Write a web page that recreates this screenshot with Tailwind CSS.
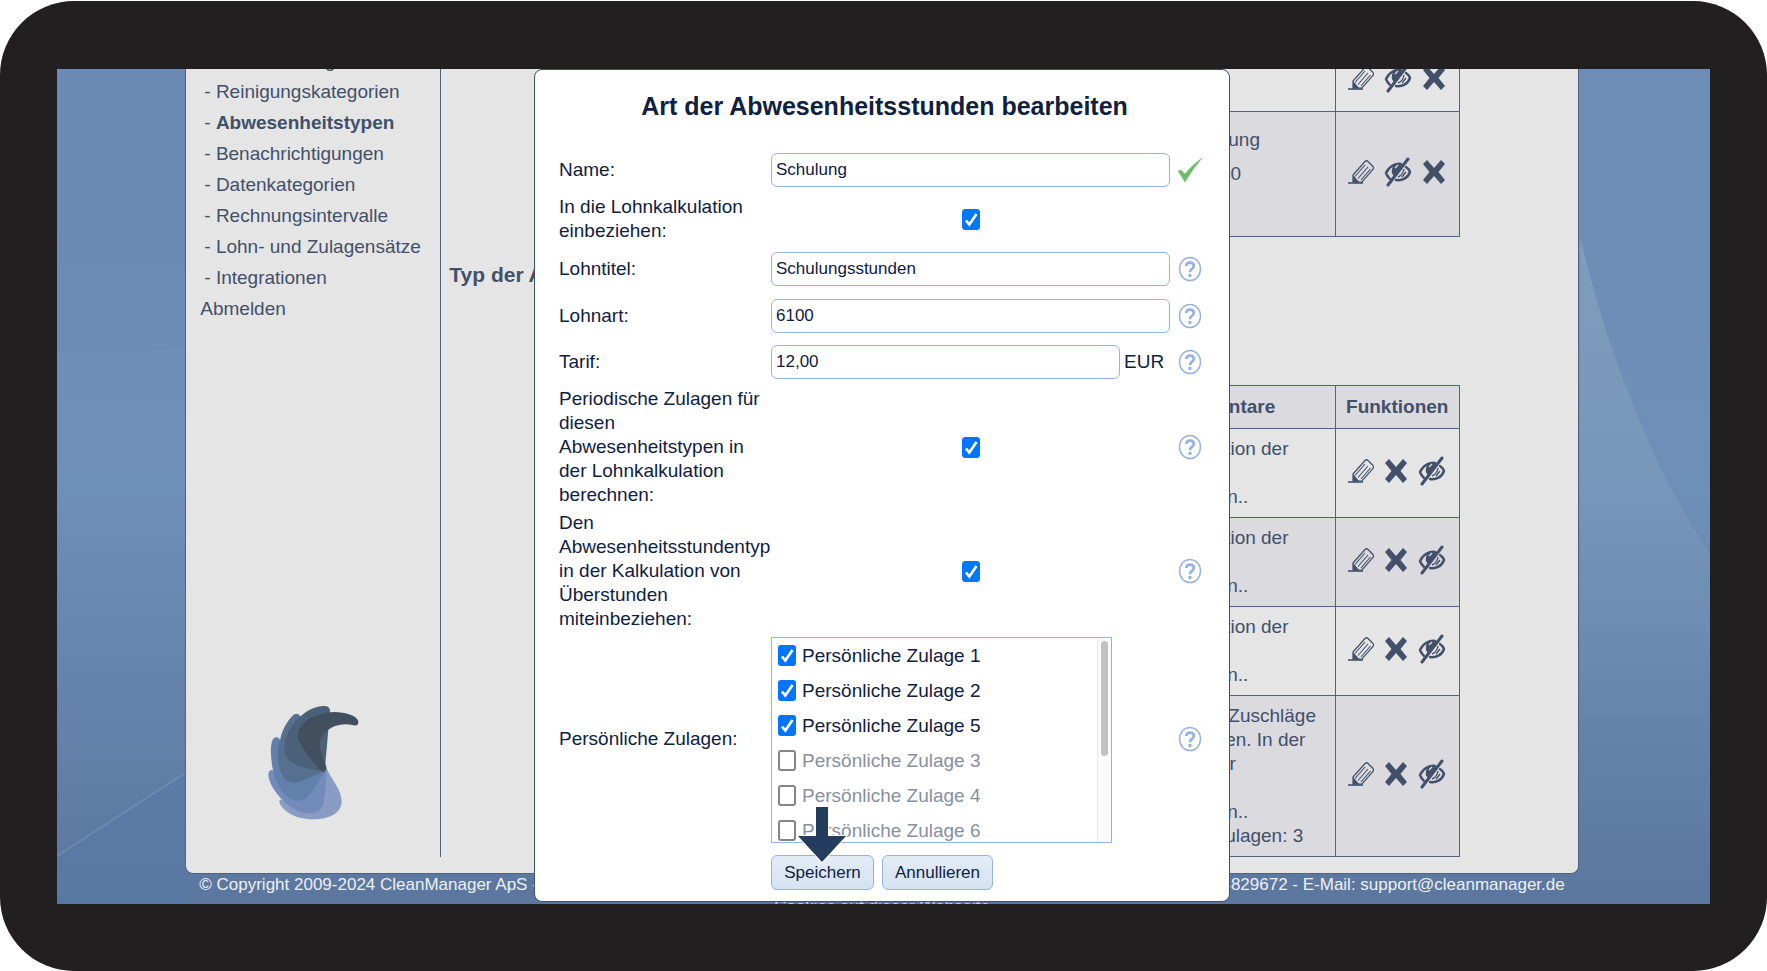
<!DOCTYPE html>
<html lang="de">

<head>
    <meta charset="UTF-8" />
    <meta name="viewport" content="width=device-width, initial-scale=1.0" />
    <!-- Tailwind CSS -->
    <script src="https://cdn.jsdelivr.net/npm/@tailwindcss/browser@4"></script>
    <title>CleanManager - Abwesenheitstypen</title>
</head>

<body class="bg-white font-['Liberation_Sans',Arial,sans-serif] text-[19px] leading-6 text-[#10213f]">

    <!-- Symbole -->
    <svg class="hidden">
        <symbol id="icon-edit" viewBox="0 0 26 24">
            <path d="M5 15 L17 1.500 Q18.500 0 20 1.500 L25 6.500 Q26 8 25 9.500 L14 22 L5 22 Z" fill="none" stroke="currentColor" stroke-width="1.200" />
            <path d="M7 16.500 L17 5 M10 18.500 L20 7 M13 20 L22.500 9" fill="none" stroke="currentColor" stroke-width="1.100" />
            <path d="M5 15 L11.500 22.500 L5 22.500 Z" fill="currentColor" />
            <path d="M0 23 H15" stroke="currentColor" stroke-width="1.600" />
        </symbol>
        <symbol id="icon-delete" viewBox="0 0 24 26">
            <path d="M1 5 L5 1 L12 9 L19 1 L23 5 L16.500 13 L23 21 L19 25 L12 17 L5 25 L1 21 L7.500 13 Z" fill="currentColor" />
        </symbol>
        <symbol id="icon-hide" viewBox="0 0 28 30">
            <path d="M2 16 C5 9 12 6 17 7 M22 10 Q25 12 26 15 C24 21 18 24 12 23 M6 22 Q3 19 2 16" fill="none" stroke="currentColor" stroke-width="2.400" stroke-linecap="round" />
            <path d="M9 9 Q6 16 10 19 L18 9 Q13 5 9 9 Z" fill="currentColor" />
            <path d="M11 11 L14 8" stroke="#dcdbe0" stroke-width="1.500" />
            <path d="M14 20 Q19 18 20 12 M18 20 L22 15" fill="none" stroke="currentColor" stroke-width="1.400" />
            <path d="M4 28 L24 2" stroke="currentColor" stroke-width="3" stroke-linecap="round" />
        </symbol>
        <symbol id="icon-help" viewBox="0 0 24 26">
            <ellipse cx="12" cy="13" rx="10.500" ry="11.500" fill="none" stroke="#97b2e0" stroke-width="1.500" />
            <path d="M8.300 10 Q8.500 6.700 12 6.700 Q15.800 6.700 15.800 10 Q15.800 12 13.600 13.200 Q12 14.200 12 16.300" fill="none" stroke="#97b2e0" stroke-width="2.700" />
            <rect x="10.500" y="18" width="3" height="3" fill="#97b2e0" />
        </symbol>
        <symbol id="icon-tick" viewBox="0 0 18 21">
            <path d="M4 11.500 L7.300 15.500 L14.500 5" fill="none" stroke="#fff" stroke-width="2.700" />
        </symbol>
    </svg>

    <div class="min-h-screen py-px">
        <div class="flex min-h-[969px] flex-col rounded-[74px] bg-[#221f20] px-[57px] pt-17 pb-[67px]">
            <div class="relative flex-1 overflow-hidden bg-linear-to-b from-[#6d8cb6] via-[#6e8fb8] to-[#5b779f] pr-[3px]">

                <!-- Lichtstreifen im Hintergrund -->
                <svg class="absolute inset-0 h-full w-full" viewBox="0 0 1653 834" preserveAspectRatio="none">
                    <defs>
                        <linearGradient id="glow" x1="0" y1="0" x2="0" y2="1">
                            <stop offset="0" stop-color="#9fb4c4" stop-opacity=".4" />
                            <stop offset=".6" stop-color="#8fa8c4" stop-opacity=".15" />
                            <stop offset="1" stop-color="#5a739b" stop-opacity="0" />
                        </linearGradient>
                    </defs>
                    <path d="M1523 167 Q1545 262 1580 345 Q1610 420 1653 484 V834 H1523 Z" fill="url(#glow)" />
                    <path d="M0 0 H130 V280 L0 284 Z" fill="#5f7fae" fill-opacity=".12" />
                    <path d="M0 786 L130 702 V834 H0 Z" fill="#5878a8" fill-opacity=".5" />
                    <path d="M0 786 L130 702" stroke="#7b9abc" stroke-opacity=".5" stroke-width="2" />
                </svg>

                <!-- Seite hinter dem Dialog -->
                <div class="absolute inset-y-0 right-[3px] left-0 mx-auto flex w-[84.3%] flex-col text-[#42506a]">
                    <div class="flex min-h-0 flex-1 rounded-b-lg border-x border-b border-[#50637f] bg-[#e5e5e5] pb-4">
                        <nav class="-mt-6 flex w-[255px] shrink-0 flex-col border-r border-[#50637f] pl-4">
                            <ul class="pl-0.5 leading-[31px] whitespace-nowrap">
                                <li>- <a href="#">Dienstleistungen</a></li>
                                <li>- <a href="#">Reinigungskategorien</a></li>
                                <li>- <a href="#" class="font-bold">Abwesenheitstypen</a></li>
                                <li>- <a href="#">Benachrichtigungen</a></li>
                                <li>- <a href="#">Datenkategorien</a></li>
                                <li>- <a href="#">Rechnungsintervalle</a></li>
                                <li>- <a href="#">Lohn- und Zulagensätze</a></li>
                                <li>- <a href="#">Integrationen</a></li>
                            </ul>
                            <a href="#" class="-ml-0.5 leading-[31px]">Abmelden</a>
                            <svg class="mt-auto mb-9 ml-16 h-[118px] w-[95px]" viewBox="260 70 285 355" preserveAspectRatio="none">
                                <path d="M300 368 Q300 358 312 360 L440 262 C455 300 486 330 487 365 C487 402 450 420 400 420 C345 420 306 392 300 368 Z" fill="#8b9cc4" />
                                <path d="M267 285 Q268 270 280 272 L441 268 C440 310 440 345 431 375 C424 398 402 405 380 402 C325 392 268 325 267 285 Z" fill="#738bba" />
                                <path d="M275 200 Q278 172 292 173 Q302 174 305 190 L440 272 C420 300 405 330 388 350 C370 368 350 367 332 358 C285 325 272 250 275 200 Z" fill="#6181ab" />
                                <path d="M345 104 Q359 99 363 112 L438 274 C410 285 380 302 355 308 C325 314 308 295 299 262 C292 230 296 200 303 178 C310 145 328 118 345 104 Z" fill="#56708f" />
                                <path d="M430 79 Q452 77 452 94 L436 276 C400 270 355 265 328 242 C305 215 315 165 345 130 C370 98 400 82 430 79 Z" fill="#4b6079" />
                                <path d="M536 122 C540 137 530 140 520 136 C480 128 440 145 425 175 C414 205 432 235 441 262 C442 274 432 280 424 273 C400 245 365 205 356 175 C350 130 410 98 465 97 C500 98 530 108 536 122 Z" fill="#414f5f" />
                            </svg>
                        </nav>

                        <main class="min-w-0 flex-1 overflow-hidden pr-[118px] pl-2">
                            <table class="-mt-[22px] ml-auto w-4/5 table-fixed border-collapse border border-[#50637f]">
                                <tbody>
                                    <tr class="h-16">
                                        <td class="border border-[#50637f]"></td>
                                        <td class="w-[216px] border border-[#50637f]"></td>
                                        <td class="w-[124px] border border-[#50637f]">
                                            <div class="flex items-center justify-center gap-2.5 pb-1">
                                                <button aria-label="Bearbeiten"><svg class="h-6 w-[26px]"><use href="#icon-edit" /></svg></button>
                                                <button aria-label="Ausblenden"><svg class="h-[30px] w-7"><use href="#icon-hide" /></svg></button>
                                                <button aria-label="Löschen"><svg class="h-[26px] w-6"><use href="#icon-delete" /></svg></button>
                                            </div>
                                        </td>
                                    </tr>
                                    <tr class="bg-[#dbdadf]">
                                        <td class="border border-[#50637f]"></td>
                                        <td class="border border-[#50637f] px-1 py-4">
                                            <p>Zur Berechnung</p>
                                            <p class="my-2.5">Lohnart: 5040</p>
                                            <p>&nbsp;</p>
                                        </td>
                                        <td class="border border-[#50637f]">
                                            <div class="flex items-center justify-center gap-2.5 pb-1">
                                                <button aria-label="Bearbeiten"><svg class="h-6 w-[26px]"><use href="#icon-edit" /></svg></button>
                                                <button aria-label="Ausblenden"><svg class="h-[30px] w-7"><use href="#icon-hide" /></svg></button>
                                                <button aria-label="Löschen"><svg class="h-[26px] w-6"><use href="#icon-delete" /></svg></button>
                                            </div>
                                        </td>
                                    </tr>
                                </tbody>
                            </table>

                            <h2 class="mt-6 mb-24 text-[21px] leading-7 font-bold">Typ der Abwesenheit</h2>

                            <table class="ml-auto w-4/5 table-fixed border-collapse border border-[#50637f]">
                                <thead>
                                    <tr class="h-[43px] bg-[#dbdadf]">
                                        <th class="border border-[#50637f]"></th>
                                        <th class="w-[216px] border border-[#50637f] pr-5">Kommentare</th>
                                        <th class="w-[124px] border border-[#50637f]">Funktionen</th>
                                    </tr>
                                </thead>
                                <tbody>
                                    <tr>
                                        <td class="border border-[#50637f]"></td>
                                        <td class="border border-[#50637f] px-1 py-2">Lohnkalkulation der<br>Stunden<br>hinzurechnen..</td>
                                        <td class="border border-[#50637f]">
                                            <div class="flex items-center justify-center gap-2.5 pb-1">
                                                <button aria-label="Bearbeiten"><svg class="h-6 w-[26px]"><use href="#icon-edit" /></svg></button>
                                                <button aria-label="Löschen"><svg class="h-[26px] w-6"><use href="#icon-delete" /></svg></button>
                                                <button aria-label="Ausblenden"><svg class="h-[30px] w-7"><use href="#icon-hide" /></svg></button>
                                            </div>
                                        </td>
                                    </tr>
                                    <tr class="bg-[#dbdadf]">
                                        <td class="border border-[#50637f]"></td>
                                        <td class="border border-[#50637f] px-1 py-2">Lohnkalkulation der<br>Stunden<br>hinzurechnen..</td>
                                        <td class="border border-[#50637f]">
                                            <div class="flex items-center justify-center gap-2.5 pb-1">
                                                <button aria-label="Bearbeiten"><svg class="h-6 w-[26px]"><use href="#icon-edit" /></svg></button>
                                                <button aria-label="Löschen"><svg class="h-[26px] w-6"><use href="#icon-delete" /></svg></button>
                                                <button aria-label="Ausblenden"><svg class="h-[30px] w-7"><use href="#icon-hide" /></svg></button>
                                            </div>
                                        </td>
                                    </tr>
                                    <tr>
                                        <td class="border border-[#50637f]"></td>
                                        <td class="border border-[#50637f] px-1 py-2">Lohnkalkulation der<br>Stunden<br>hinzurechnen..</td>
                                        <td class="border border-[#50637f]">
                                            <div class="flex items-center justify-center gap-2.5 pb-1">
                                                <button aria-label="Bearbeiten"><svg class="h-6 w-[26px]"><use href="#icon-edit" /></svg></button>
                                                <button aria-label="Löschen"><svg class="h-[26px] w-6"><use href="#icon-delete" /></svg></button>
                                                <button aria-label="Ausblenden"><svg class="h-[30px] w-7"><use href="#icon-hide" /></svg></button>
                                            </div>
                                        </td>
                                    </tr>
                                    <tr class="bg-[#dbdadf]">
                                        <td class="border border-[#50637f]"></td>
                                        <td class="border border-[#50637f] px-1 py-2">Periodische Zuschläge<br>einzubeziehen. In der<br>Stunden aller<br>Typen<br>hinzurechnen..<br>Anzahl an Zulagen: 3</td>
                                        <td class="border border-[#50637f]">
                                            <div class="flex items-center justify-center gap-2.5 pb-1">
                                                <button aria-label="Bearbeiten"><svg class="h-6 w-[26px]"><use href="#icon-edit" /></svg></button>
                                                <button aria-label="Löschen"><svg class="h-[26px] w-6"><use href="#icon-delete" /></svg></button>
                                                <button aria-label="Ausblenden"><svg class="h-[30px] w-7"><use href="#icon-hide" /></svg></button>
                                            </div>
                                        </td>
                                    </tr>
                                </tbody>
                            </table>
                        </main>
                    </div>

                    <footer class="h-[30px] shrink-0 px-3.5 text-[17px] leading-[22px] text-[#eef0f4]">
                        <div class="flex justify-between whitespace-nowrap">
                            <span>© Copyright 2009-2024 CleanManager ApS -</span>
                            <span>Telefon: 069 34829672 - E-Mail: support@cleanmanager.de</span>
                        </div>
                        <p class="text-center text-[#c3cddc]">Cookies auf dieser Webseite</p>
                    </footer>
                </div>

                <!-- Dialog -->
                <form class="relative mx-auto mb-0.5 w-[696px] max-w-full rounded-lg border border-[#3d4f6c] bg-white pt-[15px] pr-[19px] pb-[11px] pl-6">
                    <h1 class="mb-5 text-center text-[25px] leading-[42px] font-bold">Art der Abwesenheitsstunden bearbeiten</h1>

                    <div class="grid grid-cols-[212px_1fr_40px] items-center">
                        <label for="name" class="leading-[46px]">Name:</label>
                        <input id="name" type="text" value="Schulung" class="h-[34px] w-full rounded-md border border-[#97b2e0] px-1 text-[17px]" />
                        <svg class="mx-auto h-6 w-6" viewBox="0 0 24 24">
                            <path d="M0 13 L3 12 L7 16 Q14 7 24 0 Q14 12 7 24 Z" fill="#6dbd6a" stroke="#6dbd6a" stroke-width=".5" />
                        </svg>

                        <label for="lohnkalkulation" class="py-0.5">In die Lohnkalkulation einbeziehen:</label>
                        <span class="mx-auto grid">
                            <input id="lohnkalkulation" type="checkbox" checked class="col-start-1 row-start-1 h-[21px] w-[18px] appearance-none rounded-[3px] border border-[#757575] checked:border-[#0075ff] checked:bg-[#0075ff]" />
                            <svg class="pointer-events-none col-start-1 row-start-1 h-[21px] w-[18px]"><use href="#icon-tick" /></svg>
                        </span>
                        <span></span>

                        <label for="lohntitel" class="leading-[47px]">Lohntitel:</label>
                        <input id="lohntitel" type="text" value="Schulungsstunden" class="h-[34px] w-full rounded-md border border-[#97b2e0] px-1 text-[17px]" />
                        <svg class="mx-auto h-[26px] w-6"><use href="#icon-help" /></svg>

                        <label for="lohnart" class="leading-[47px]">Lohnart:</label>
                        <input id="lohnart" type="text" value="6100" class="h-[34px] w-full rounded-md border border-[#97b2e0] px-1 text-[17px]" />
                        <svg class="mx-auto h-[26px] w-6"><use href="#icon-help" /></svg>

                        <label for="tarif" class="leading-[46px]">Tarif:</label>
                        <div class="flex items-center gap-1">
                            <input id="tarif" type="text" value="12,00" class="h-[34px] min-w-0 flex-1 rounded-md border border-[#97b2e0] px-1 text-[17px]" />
                            <span class="w-[46px]">EUR</span>
                        </div>
                        <svg class="mx-auto h-[26px] w-6"><use href="#icon-help" /></svg>

                        <label for="periodisch" class="py-0.5">Periodische Zulagen für diesen Abwesenheitstypen in der Lohnkalkulation berechnen:</label>
                        <span class="mx-auto grid">
                            <input id="periodisch" type="checkbox" checked class="col-start-1 row-start-1 h-[21px] w-[18px] appearance-none rounded-[3px] border border-[#757575] checked:border-[#0075ff] checked:bg-[#0075ff]" />
                            <svg class="pointer-events-none col-start-1 row-start-1 h-[21px] w-[18px]"><use href="#icon-tick" /></svg>
                        </span>
                        <svg class="mx-auto h-[26px] w-6"><use href="#icon-help" /></svg>

                        <label for="ueberstunden" class="py-0.5">Den Abwesenheitsstundentyp in der Kalkulation von Überstunden miteinbeziehen:</label>
                        <span class="mx-auto grid">
                            <input id="ueberstunden" type="checkbox" checked class="col-start-1 row-start-1 h-[21px] w-[18px] appearance-none rounded-[3px] border border-[#757575] checked:border-[#0075ff] checked:bg-[#0075ff]" />
                            <svg class="pointer-events-none col-start-1 row-start-1 h-[21px] w-[18px]"><use href="#icon-tick" /></svg>
                        </span>
                        <svg class="mx-auto h-[26px] w-6"><use href="#icon-help" /></svg>

                        <span id="zulagen-label">Persönliche Zulagen:</span>
                        <div role="group" aria-labelledby="zulagen-label" class="mt-1 mb-px flex h-[206px] w-[341px] max-w-full overflow-hidden border border-[#97b2e0]">
                            <div id="zulagen" class="flex-1 pl-1.5 leading-[35px] whitespace-nowrap"></div>
                            <!-- Bildlaufleiste -->
                            <div class="w-3.5 border-l border-[#e8e8e8] bg-[#fafafa] pt-[3px] pl-[3px]">
                                <div class="h-[115px] w-[7px] rounded-full bg-[#c1c1c1]"></div>
                            </div>
                        </div>
                        <svg class="mx-auto h-[26px] w-6"><use href="#icon-help" /></svg>

                        <div class="col-start-2 mt-[11px] flex gap-2 text-[17px]">
                            <div class="relative">
                                <button type="button" class="h-[35px] w-[103px] rounded-md border border-[#97b2e0] bg-linear-to-b from-[#e4ecf6] to-[#d5e3f2]">Speichern</button>
                                <svg class="pointer-events-none absolute -top-[50px] left-[25px] h-[60px] w-[52px]" viewBox="0 0 52 60">
                                    <path d="M20 2 H32 V31 H50 L26 57 L2 31 H20 Z" fill="#243c5e" stroke="#fff" stroke-width="2" paint-order="stroke" />
                                </svg>
                            </div>
                            <button type="button" class="h-[35px] w-[111px] rounded-md border border-[#97b2e0] bg-linear-to-b from-[#e4ecf6] to-[#d5e3f2]">Annullieren</button>
                        </div>
                    </div>
                </form>
            </div>
        </div>
    </div>

    <!-- Liste der Zulagen -->
    <script>
        const zulagen = [
            { nr: 1, aktiv: true },
            { nr: 2, aktiv: true },
            { nr: 5, aktiv: true },
            { nr: 3, aktiv: false },
            { nr: 4, aktiv: false },
            { nr: 6, aktiv: false }
        ];

        document.getElementById("zulagen").innerHTML = zulagen.map((z) => `
            <label class="flex items-center gap-1.5 ${z.aktiv ? "" : "text-[#8790a0]"}">
                <span class="grid">
                    <input type="checkbox" ${z.aktiv ? "checked" : ""} class="col-start-1 row-start-1 h-[21px] w-[18px] appearance-none rounded-[3px] border-2 border-[#858585] checked:border-[#0075ff] checked:bg-[#0075ff]" />
                    <svg class="pointer-events-none col-start-1 row-start-1 h-[21px] w-[18px]"><use href="#icon-tick" /></svg>
                </span>
                Persönliche Zulage ${z.nr}
            </label>`).join("");
    </script>
</body>

</html>
